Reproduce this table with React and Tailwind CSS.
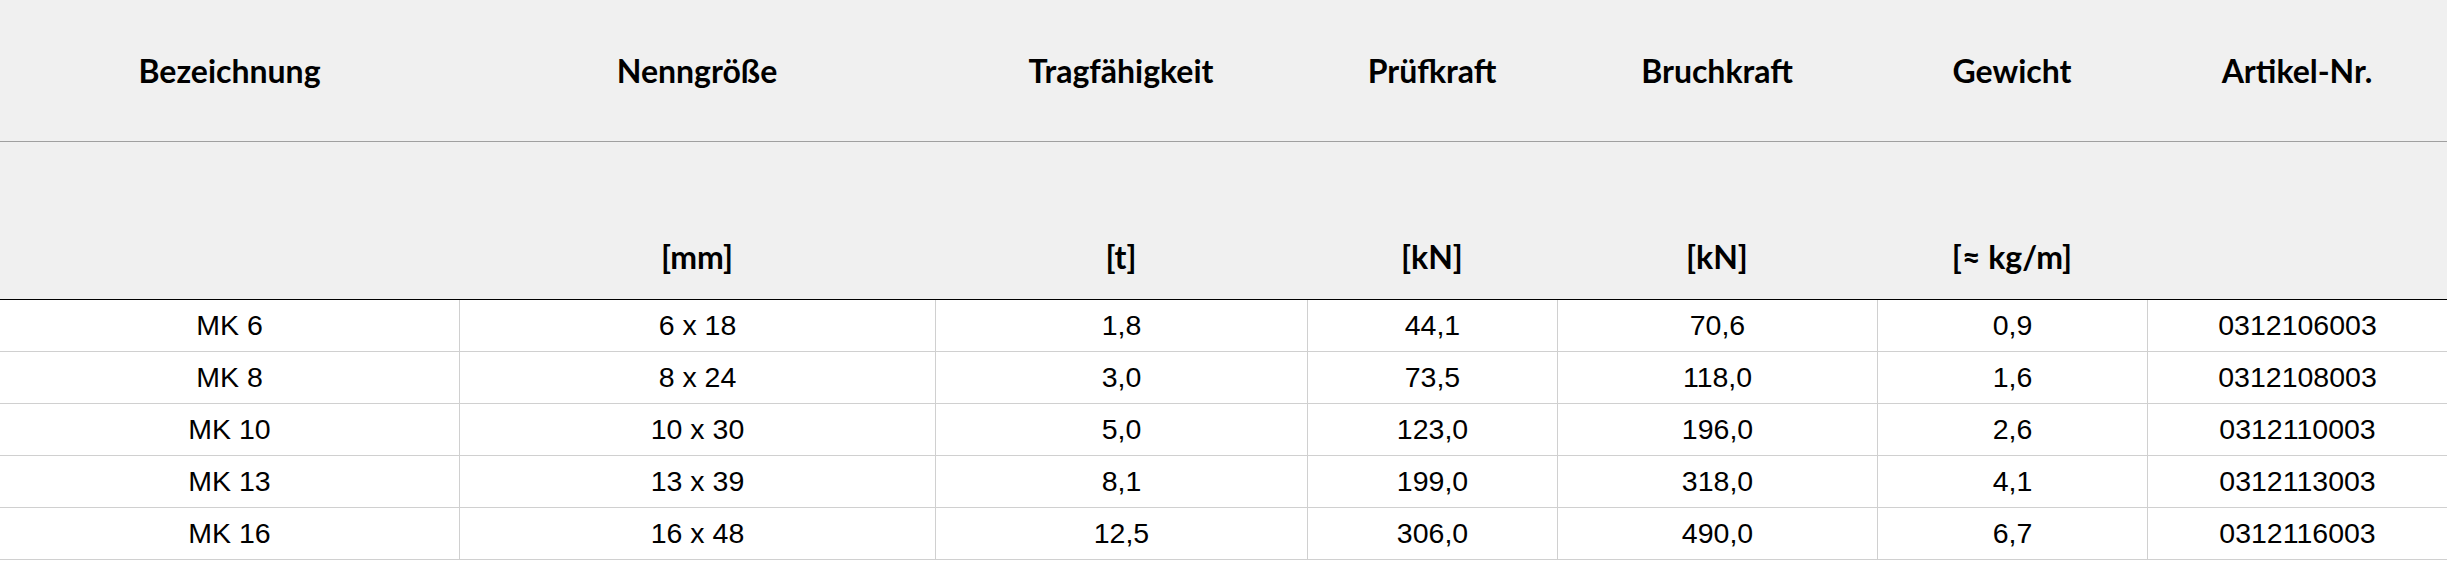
import React from "react";

const cols = "grid grid-cols-[459px_476px_372px_250px_320px_270px_300px]";

const heads = [
  ["Bezeichnung", ""],
  ["Nenngröße", "[mm]"],
  ["Tragfähigkeit", "[t]"],
  ["Prüfkraft", "[kN]"],
  ["Bruchkraft", "[kN]"],
  ["Gewicht", "[≈ kg/m]"],
  ["Artikel-Nr.", ""],
];

const rows = [
  ["MK 6", "6 x 18", "1,8", "44,1", "70,6", "0,9", "0312106003"],
  ["MK 8", "8 x 24", "3,0", "73,5", "118,0", "1,6", "0312108003"],
  ["MK 10", "10 x 30", "5,0", "123,0", "196,0", "2,6", "0312110003"],
  ["MK 13", "13 x 39", "8,1", "199,0", "318,0", "4,1", "0312113003"],
  ["MK 16", "16 x 48", "12,5", "306,0", "490,0", "6,7", "0312116003"],
];

export default function App() {
  return (
    <div className="w-[2447px] h-[561px] overflow-hidden bg-white text-black">
      <div className="bg-[#f0f0f0] font-['Lato','Open_Sans',sans-serif] font-bold text-[32px]">
        <div className={`${cols} h-[142px] items-center border-b border-[#a0a0a0]`}>
          {heads.map(([h], i) => (
            <div key={i} className="text-center leading-none">
              {h}
            </div>
          ))}
        </div>
        <div className={`${cols} h-[158px] items-end pb-[20px] border-b border-black`}>
          {heads.map(([, u], i) => (
            <div key={i} className="text-center leading-[44px]">
              {u}
            </div>
          ))}
        </div>
      </div>
      <div className="font-['Liberation_Sans','Arial',sans-serif] text-[28.5px]">
        {rows.map((r, ri) => (
          <div key={ri} className={`${cols} h-[52px] border-b border-[#d0d0d0]`}>
            {r.map((c, ci) => (
              <div
                key={ci}
                className={`flex items-center justify-center ${ci > 0 ? "border-l border-[#d0d0d0]" : ""}`}
              >
                {c}
              </div>
            ))}
          </div>
        ))}
      </div>
    </div>
  );
}
